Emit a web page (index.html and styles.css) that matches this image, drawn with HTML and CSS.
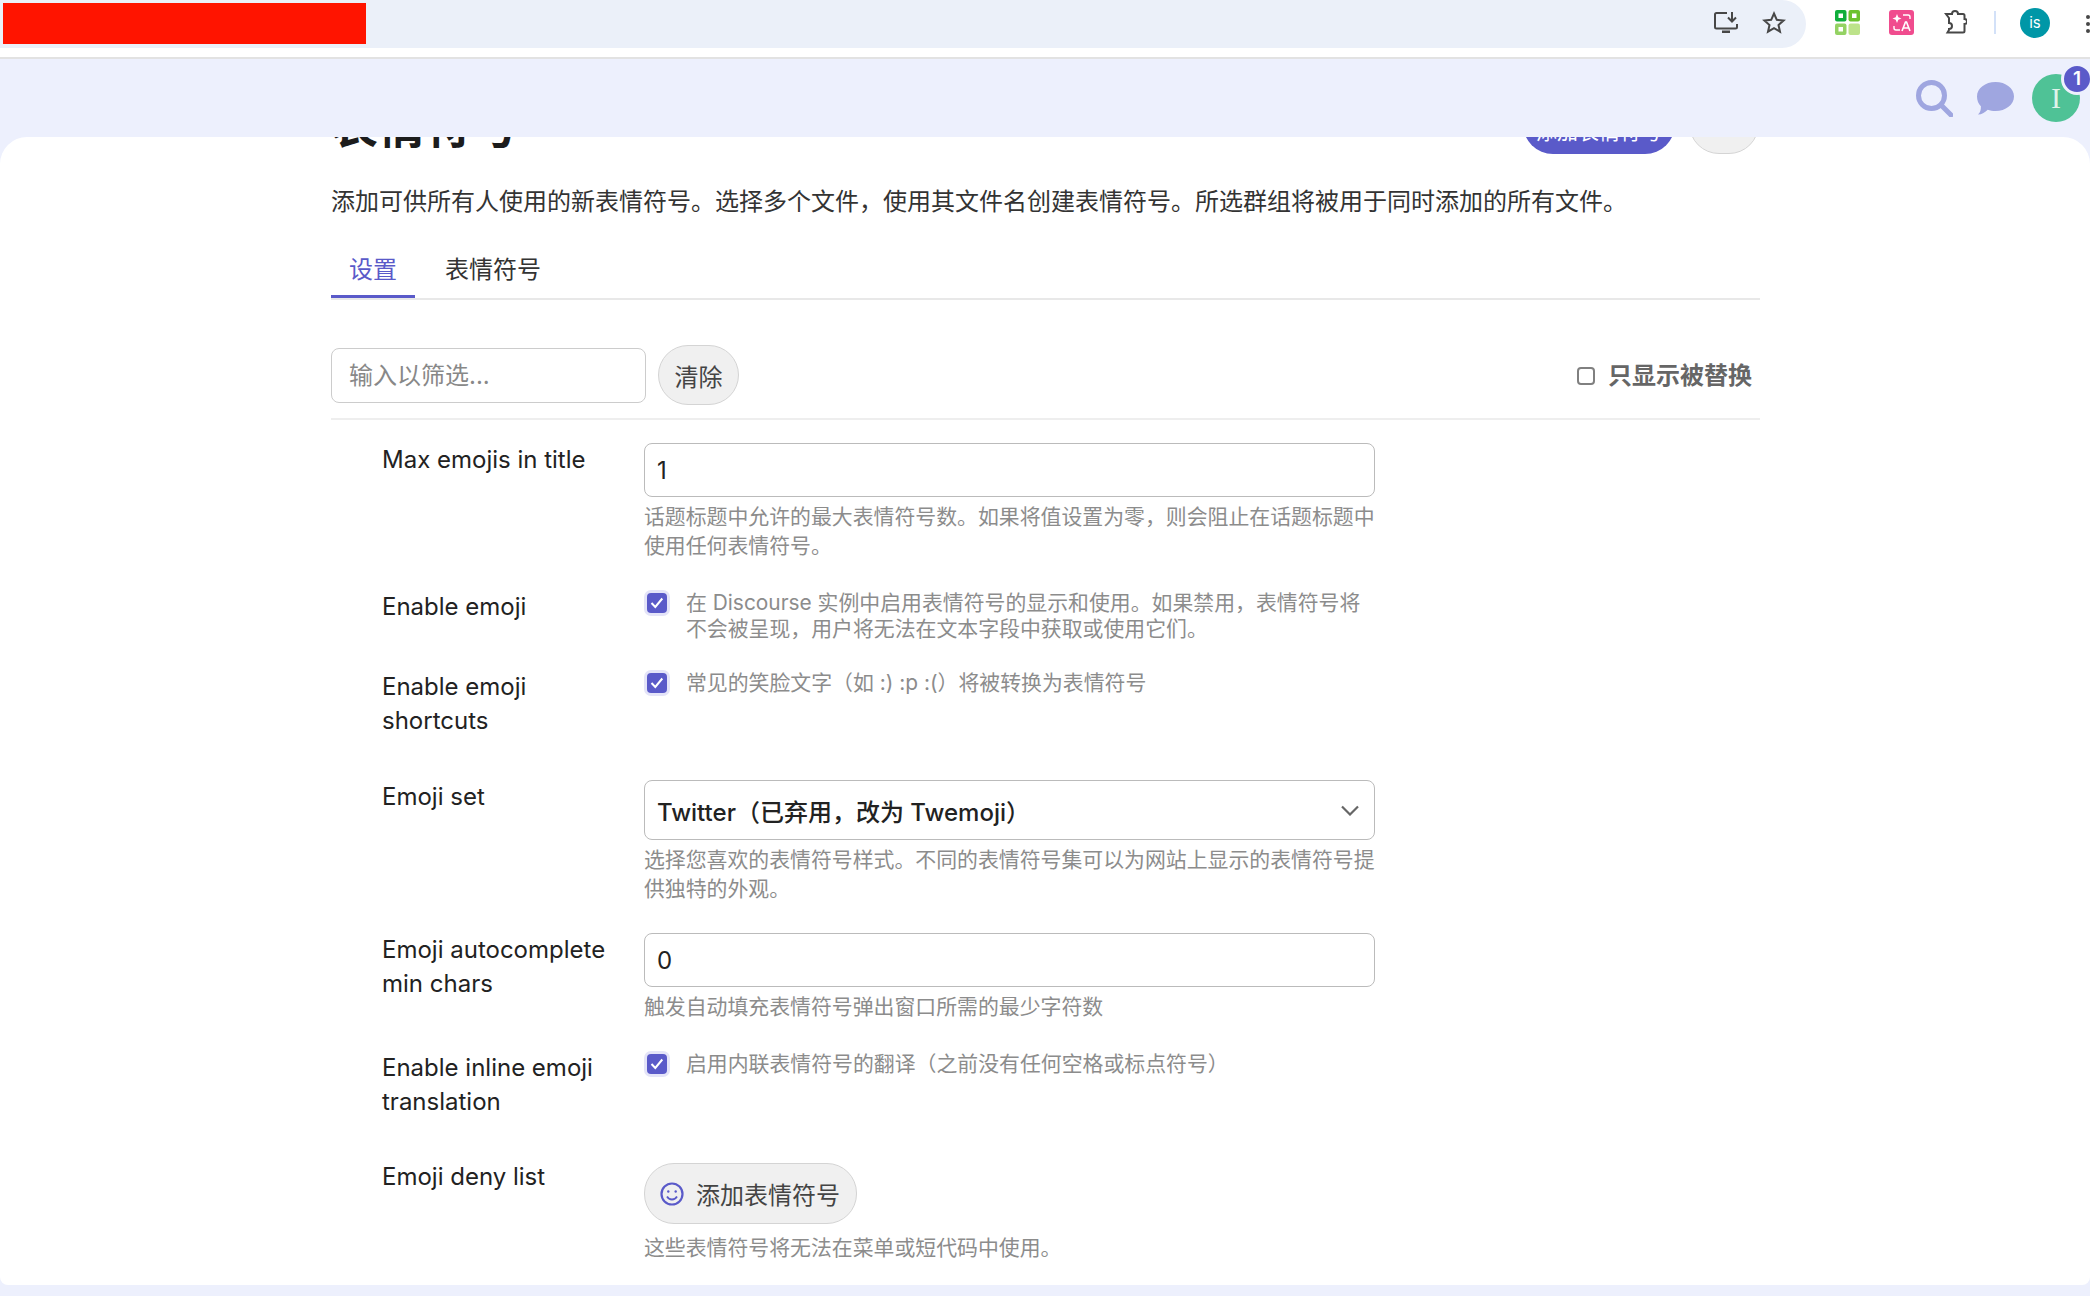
FILE: index.html
```html
<!DOCTYPE html>
<html lang="zh-CN">
<head>
    <meta charset="UTF-8">
    <title>表情符号</title>
    <link rel="stylesheet" href="styles.css">
</head>
<body>

    <!-- Browser toolbar -->
    <div class="browser-bar">
        <div class="address-pill">
            <div class="redacted"></div>
            <div class="pill-icons">
                <svg width="24" height="22" viewBox="0 0 24 22" fill="none" stroke="#474747" stroke-width="2"><path d="M13 2H2.500A1.500 1.500 0 0 0 1 3.500V16a1.500 1.500 0 0 0 1.500 1.500h19A1.500 1.500 0 0 0 23 16v-3"/><path d="M18 1v9M14 6.500l4 4 4-4"/><path d="M8 21h8" stroke-width="3"/></svg>
                <svg width="24" height="23" viewBox="0 0 24 23" fill="none" stroke="#474747" stroke-width="2"><path d="M12 2.500l2.800 6.300 6.800.7-5.100 4.500 1.500 6.700-6-3.500-6 3.500 1.500-6.700-5.100-4.500 6.800-.7z"/></svg>
            </div>
        </div>
        <div class="ext-icons">
            <svg class="ext-grid" width="25" height="25" viewBox="0 0 25 25"><rect x="0" y="0" width="11.500" height="11.500" rx="2" fill="#0fae3c"/><rect x="13.500" y="0" width="11.500" height="11.500" rx="2" fill="#6cc22e"/><rect x="0" y="13.500" width="11.500" height="11.500" rx="2" fill="#94d263"/><rect x="13.500" y="13.500" width="11.500" height="11.500" rx="2" fill="#bde38a"/><rect x="3.500" y="3.500" width="4.500" height="4.500" fill="#fff"/><rect x="17" y="3.500" width="4.500" height="4.500" fill="#fff"/><rect x="3.500" y="17" width="4.500" height="4.500" fill="#fff"/></svg>
            <svg class="ext-translate" width="25" height="25" viewBox="0 0 25 25"><rect width="25" height="25" rx="3" fill="#f04c8e"/><path d="M8 4l1.300 3.200L12.500 8.500 9.300 9.800 8 13l-1.300-3.200L3.500 8.500l3.200-1.300z" fill="#fff"/><path d="M14 5h5a2 2 0 0 1 2 2v2M5 16v2a2 2 0 0 0 2 2h4" fill="none" stroke="#fff" stroke-width="1.400"/><path d="M13 21l3.500-9h1l3.500 9M14.500 18h5" fill="none" stroke="#fff" stroke-width="1.600"/></svg>
            <svg class="ext-puzzle" width="23" height="25" viewBox="0 0 23 25" fill="none" stroke="#474747" stroke-width="2"><path d="M2 5h6a3 3 0 0 1 6 0h5a1.500 1.500 0 0 1 1.500 1.500v3.500a2.500 2.500 0 0 1 0 5v7A1.500 1.500 0 0 1 19 23.500H3.500L5 21v-1a3 3 0 0 0 0-6V9z"/></svg>
            <span class="bar-divider"></span>
            <span class="profile-dot">is</span>
            <span class="kebab"><i></i><i></i><i></i></span>
        </div>
    </div>

    <!-- Site header -->
    <header class="site-header">
        <svg class="header-icon" width="37" height="37" viewBox="0 0 37 37" fill="none" stroke="#9fa6e0"><circle cx="15.500" cy="15.500" r="13" stroke-width="5"/><path d="M25 25l10 10" stroke-width="5" stroke-linecap="round"/></svg>
        <svg class="header-icon" width="37" height="33" viewBox="0 0 37 33" fill="#9fa6e0"><path d="M18.500 0C28.700 0 37 6.300 37 14.500S28.700 29 18.500 29c-2.800 0-5.400-.5-7.800-1.300C8.200 30.300 5 32.500 1 32.500c2.500-2.200 3-5 2.900-8.200C1.400 21.800 0 18.300 0 14.500 0 6.300 8.300 0 18.500 0z"/></svg>
        <div class="user-avatar">
            I
            <span class="notify-badge">1</span>
        </div>
    </header>

    <!-- Main panel -->
    <main class="panel">
        <div class="panel-inner">
            <div class="title-row">
                <h1>表情符号</h1>
                <div class="title-actions">
                    <button class="btn btn-primary">添加表情符号</button>
                    <button class="btn btn-more">...</button>
                </div>
            </div>

            <p class="page-desc">添加可供所有人使用的新表情符号。选择多个文件，使用其文件名创建表情符号。所选群组将被用于同时添加的所有文件。</p>

            <ul class="tabs">
                <li class="active">设置</li>
                <li>表情符号</li>
            </ul>

            <div class="filter-row">
                <input class="filter-input" type="text" placeholder="输入以筛选...">
                <button class="btn btn-clear">清除</button>
                <label class="only-overridden"><span class="plain-box"></span>只显示被替换</label>
            </div>

            <!-- Settings -->
            <div class="setting">
                <div class="setting-label">Max emojis in title</div>
                <div class="setting-value">
                    <input class="text-input" type="text" value="1">
                    <div class="help">话题标题中允许的最大表情符号数。如果将值设置为零，则会阻止在话题标题中使用任何表情符号。</div>
                </div>
            </div>

            <div class="setting">
                <div class="setting-label">Enable emoji</div>
                <div class="setting-value check-row">
                    <span class="check-box"><svg width="14" height="12" viewBox="0 0 14 12" fill="none" stroke="#fff" stroke-width="2"><path d="M1.500 6l3.800 4 7-8.500"/></svg></span>
                    <span class="check-text">在 Discourse 实例中启用表情符号的显示和使用。如果禁用，表情符号将不会被呈现，用户将无法在文本字段中获取或使用它们。</span>
                </div>
            </div>

            <div class="setting">
                <div class="setting-label">Enable emoji shortcuts</div>
                <div class="setting-value check-row">
                    <span class="check-box"><svg width="14" height="12" viewBox="0 0 14 12" fill="none" stroke="#fff" stroke-width="2"><path d="M1.500 6l3.800 4 7-8.500"/></svg></span>
                    <span class="check-text">常见的笑脸文字（如 :) :p :(）将被转换为表情符号</span>
                </div>
            </div>

            <div class="setting">
                <div class="setting-label">Emoji set</div>
                <div class="setting-value">
                    <div class="select-box">
                        <span>Twitter（已弃用，改为 Twemoji）</span>
                        <svg width="18" height="11" viewBox="0 0 18 11" fill="none" stroke="#666" stroke-width="2.200"><path d="M1 1.500l8 8 8-8"/></svg>
                    </div>
                    <div class="help">选择您喜欢的表情符号样式。不同的表情符号集可以为网站上显示的表情符号提供独特的外观。</div>
                </div>
            </div>

            <div class="setting">
                <div class="setting-label">Emoji autocomplete min chars</div>
                <div class="setting-value">
                    <input class="text-input" type="text" value="0">
                    <div class="help">触发自动填充表情符号弹出窗口所需的最少字符数</div>
                </div>
            </div>

            <div class="setting">
                <div class="setting-label">Enable inline emoji translation</div>
                <div class="setting-value check-row">
                    <span class="check-box"><svg width="14" height="12" viewBox="0 0 14 12" fill="none" stroke="#fff" stroke-width="2"><path d="M1.500 6l3.800 4 7-8.500"/></svg></span>
                    <span class="check-text">启用内联表情符号的翻译（之前没有任何空格或标点符号）</span>
                </div>
            </div>

            <div class="setting setting-deny">
                <div class="setting-label">Emoji deny list</div>
                <div class="setting-value">
                    <button class="btn btn-emoji">
                        <svg width="24" height="24" viewBox="0 0 24 24" fill="none" stroke="#5a5ac9" stroke-width="2.200"><circle cx="12" cy="12" r="10.500"/><circle cx="8.300" cy="9.500" r="1.200" fill="#5a5ac9" stroke="none"/><circle cx="15.700" cy="9.500" r="1.200" fill="#5a5ac9" stroke="none"/><path d="M7 14.500c1.200 2 3 3 5 3s3.800-1 5-3" stroke-width="1.800"/></svg>
                        添加表情符号
                    </button>
                    <div class="help">这些表情符号将无法在菜单或短代码中使用。</div>
                </div>
            </div>
        </div>
    </main>

</body>
</html>
```

FILE: styles.css
```css
/* Page */
body {
    margin: 0;
    height: 1296px;
    overflow: hidden;
    background-color: #edf0fd;
    color: #222;
    font-family: 'Inter', 'Noto Sans CJK SC', sans-serif;
    font-size: 24px;
}

/* Browser toolbar */
.browser-bar {
    display: flex;
    height: 59px;
    background-color: #fff;
    border-bottom: 2px solid #e2e2e2;
    box-sizing: border-box;
}

.address-pill {
    width: 1809px;
    height: 48px;
    padding: 3px 20px 0 3px;
    box-sizing: border-box;
    display: flex;
    justify-content: space-between;
    background-color: #ebf0f9;
    border-radius: 0 27px 27px 0;
}

.redacted {
    width: 363px;
    height: 41px;
    background-color: #ff1400;
}

.pill-icons {
    display: flex;
    gap: 24px;
    padding-top: 8px;
    height: 24px;
}

.ext-icons {
    flex: 1;
    display: flex;
    align-items: flex-start;
}

.ext-grid {
    margin: 10px 0 0 29px;
}

.ext-translate {
    margin: 10px 0 0 29px;
}

.ext-puzzle {
    margin: 9px 0 0 30px;
}

.bar-divider {
    width: 2px;
    height: 23px;
    margin: 11px 0 0 27px;
    background-color: #d3e1f8;
}

.profile-dot {
    width: 30px;
    height: 30px;
    margin: 8px 0 0 24px;
    border-radius: 50%;
    background-color: #0097a7;
    color: #fff;
    font-size: 15px;
    line-height: 30px;
    text-align: center;
}

.kebab {
    display: flex;
    flex-direction: column;
    gap: 3px;
    margin: 15px 0 0 36px;
}

.kebab i {
    width: 4px;
    height: 4px;
    border-radius: 50%;
    background-color: #474747;
}

/* Site header */
.site-header {
    height: 78px;
    display: flex;
    justify-content: flex-end;
    align-items: center;
    gap: 24px;
    padding-right: 10px;
}

.user-avatar {
    position: relative;
    width: 48px;
    height: 48px;
    margin-left: -6px;
    border-radius: 50%;
    background-color: #4fc296;
    color: #dff3ea;
    font-family: 'Liberation Serif', serif;
    font-size: 30px;
    line-height: 48px;
    text-align: center;
}

.notify-badge {
    position: absolute;
    top: -11px;
    right: -13px;
    width: 26px;
    height: 26px;
    border-radius: 50%;
    border: 3px solid #edf0fd;
    background-color: #5a5ac9;
    color: #fff;
    font-family: 'Inter', sans-serif;
    font-size: 19px;
    font-weight: 600;
    line-height: 26px;
}

/* Main panel */
.panel {
    height: 1148px;
    overflow: hidden;
    background-color: #fff;
    border-radius: 27px 27px 8px 8px;
}

.panel-inner {
    width: 1429px;
    margin-left: 331px;
}

.title-row {
    display: flex;
    justify-content: space-between;
    margin-top: -43px;
    height: 60px;
}

h1 {
    margin: 2px 0 0;
    font-size: 47px;
    line-height: 60px;
    font-weight: 700;
    color: #1c1c1c;
}

.title-actions {
    display: flex;
    gap: 14px;
    padding-right: 1px;
}

.btn {
    font-family: inherit;
    font-size: 24px;
    color: #444;
    border: 1px solid #d4d4d4;
    border-radius: 30px;
    background-color: #f0f0f0;
    box-sizing: border-box;
}

.btn-primary {
    width: 152px;
    height: 60px;
    padding: 11px 0 0;
    font-size: 21px;
    color: #fff;
    border: none;
    background-color: #5a5ac9;
}

.btn-more {
    width: 70px;
    height: 60px;
    padding: 0;
}

.page-desc {
    margin: 31px 0 0;
    font-size: 24px;
    line-height: 34px;
    color: #333;
}

/* Tabs */
.tabs {
    display: flex;
    gap: 30px;
    margin: 31px 0 0;
    padding: 0;
    list-style-type: none;
    border-bottom: 2px solid #e8e8e8;
    height: 48px;
}

.tabs li {
    padding: 0 18px;
    font-size: 24px;
    line-height: 40px;
    color: #333;
    box-sizing: border-box;
    height: 48px;
}

.tabs li + li {
    padding: 0;
}

.tabs li.active {
    color: #5a5ac9;
    border-bottom: 3px solid #5a5ac9;
}

/* Filter row */
.filter-row {
    display: flex;
    align-items: center;
    gap: 12px;
    margin-top: 45px;
    height: 60px;
    padding-bottom: 13px;
    border-bottom: 2px solid #eee;
}

.filter-input {
    width: 315px;
    height: 55px;
    padding: 0 17px;
    font-family: inherit;
    font-size: 24px;
    border: 1px solid #ccc;
    border-radius: 8px;
    box-sizing: border-box;
}

.filter-input::placeholder {
    color: #888;
}

.btn-clear {
    width: 81px;
    height: 60px;
    padding: 0;
}

.only-overridden {
    margin-left: auto;
    margin-right: 8px;
    margin-bottom: 4px;
    display: flex;
    align-items: center;
    gap: 13px;
    font-size: 24px;
    font-weight: 700;
    color: #666;
}

.plain-box {
    width: 18px;
    height: 18px;
    margin-top: 5px;
    border: 2px solid #808080;
    border-radius: 4px;
    box-sizing: border-box;
}

/* Settings rows */
.setting {
    display: flex;
    margin-bottom: 30px;
}

.filter-row + .setting {
    margin-top: 23px;
}

.setting-label {
    width: 313px;
    padding: 0 30px 12px 51px;
    box-sizing: border-box;
    font-size: 24px;
    line-height: 34px;
    color: #222;
}

.setting-value {
    width: 731px;
}

.setting-deny {
    margin-top: 32px;
}

.setting-deny .setting-label {
    margin-top: -3px;
}

.text-input {
    display: block;
    width: 100%;
    height: 54px;
    padding: 0 12px;
    font-family: inherit;
    font-size: 24px;
    color: #222;
    border: 1px solid #bbb;
    border-radius: 8px;
    box-sizing: border-box;
}

.select-box {
    display: flex;
    justify-content: space-between;
    align-items: center;
    height: 60px;
    padding: 0 15px 0 12px;
    font-size: 24px;
    font-weight: 500;
    border: 1px solid #bbb;
    border-radius: 8px;
    box-sizing: border-box;
}

.help {
    margin-top: 5px;
    font-size: 20.880px;
    line-height: 29px;
    color: #8c8c8c;
}

.check-row {
    display: flex;
    gap: 16px;
    margin-bottom: -2px;
}

.check-box {
    flex: none;
    width: 20px;
    height: 20px;
    margin: 3px;
    display: flex;
    align-items: center;
    justify-content: center;
    border-radius: 4px;
    background-color: #5a5ac9;
    box-shadow: 0 0 0 3px #e4e4f8;
}

.check-text {
    font-size: 20.880px;
    line-height: 26px;
    color: #8c8c8c;
}

.btn-emoji {
    display: flex;
    align-items: center;
    gap: 12px;
    width: 213px;
    height: 61px;
    margin-bottom: 9px;
    padding: 0 0 0 15px;
    font-size: 24px;
}
```
